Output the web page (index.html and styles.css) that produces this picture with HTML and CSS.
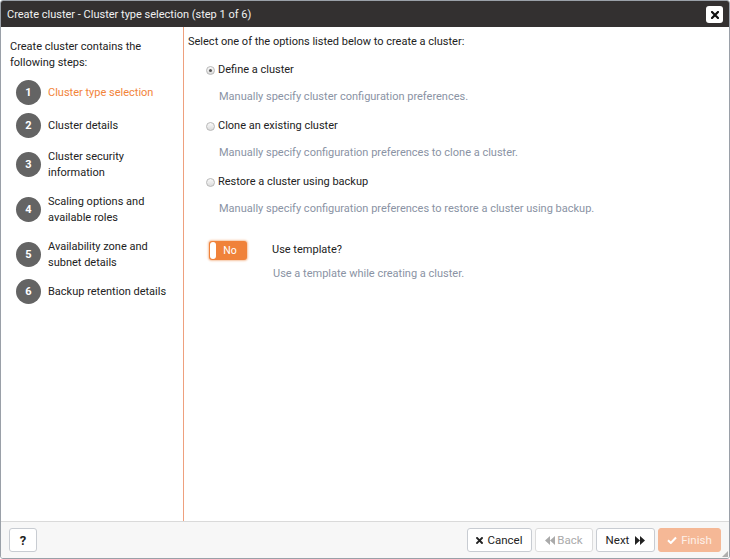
FILE: index.html
```html
<!DOCTYPE html>
<html>
<head>
<meta charset="utf-8">
<link rel="stylesheet" href="styles.css">
</head>
<body>
<div class="dialog">
  <div class="header">
    <span class="title">Create cluster - Cluster type selection (step 1 of 6)</span>
    <span class="close"><svg width="8" height="8" viewBox="0 0 8 8"><path d="M1 1L7 7M7 1L1 7" stroke="#111" stroke-width="2.2" stroke-linecap="square"/></svg></span>
  </div>
  <div class="body">
    <div class="steps">
      <div class="intro">Create cluster contains the following steps:</div>
      <div class="step active"><span class="num">1</span><span class="txt">Cluster type selection</span></div>
      <div class="step"><span class="num">2</span><span class="txt">Cluster details</span></div>
      <div class="step"><span class="num">3</span><span class="txt">Cluster security information</span></div>
      <div class="step"><span class="num">4</span><span class="txt">Scaling options and available roles</span></div>
      <div class="step"><span class="num">5</span><span class="txt">Availability zone and subnet details</span></div>
      <div class="step"><span class="num">6</span><span class="txt">Backup retention details</span></div>
    </div>
    <div class="content">
      <div class="lead">Select one of the options listed below to create a cluster:</div>
      <div class="option">
        <div class="radio-row"><span class="radio checked"></span><span>Define a cluster</span></div>
        <div class="desc">Manually specify cluster configuration preferences.</div>
      </div>
      <div class="option">
        <div class="radio-row"><span class="radio"></span><span>Clone an existing cluster</span></div>
        <div class="desc">Manually specify configuration preferences to clone a cluster.</div>
      </div>
      <div class="option">
        <div class="radio-row"><span class="radio"></span><span>Restore a cluster using backup</span></div>
        <div class="desc">Manually specify configuration preferences to restore a cluster using backup.</div>
      </div>
      <div class="template">
        <div class="toggle"><span class="handle"></span><span class="tlabel">No</span></div>
        <div class="tinfo">
          <div class="tq">Use template?</div>
          <div class="tdesc">Use a template while creating a cluster.</div>
        </div>
      </div>
    </div>
  </div>
  <div class="footer">
    <button class="btn help">?</button>
    <div class="actions">
      <button class="btn cancel"><svg class="ico" width="7" height="7" viewBox="0 0 7 7"><path d="M1 1L6 6M6 1L1 6" stroke="#222" stroke-width="1.9" stroke-linecap="square"/></svg>Cancel</button>
      <button class="btn back disabled"><svg class="ico" width="10" height="9" viewBox="0 0 10 9"><path d="M5 0V9L0 4.5Z M10 0V9L5 4.5Z" fill="#aaa"/></svg>Back</button>
      <button class="btn next">Next<svg class="ico" width="10" height="9" viewBox="0 0 10 9"><path d="M0 0V9L5 4.5Z M5 0V9L10 4.5Z" fill="#222"/></svg></button>
      <button class="btn finish"><svg class="ico" width="10" height="8" viewBox="0 0 10 8"><path d="M1 4.2L3.8 7L9 1.5" stroke="#fff" stroke-width="2" fill="none"/></svg>Finish</button>
    </div>
  </div>
  <span class="grip"></span>
</div>
</body>
</html>
```

FILE: styles.css
```css
* { box-sizing: border-box; }
html, body { margin: 0; padding: 0; }
body {
  width: 730px;
  height: 559px;
  font-family: Roboto, "Liberation Sans", Arial, sans-serif;
  font-size: 11px;
  color: #222;
  background: #fff;
  overflow: hidden;
}
.dialog {
  position: relative;
  width: 730px;
  height: 559px;
  border: 1px solid #9aa0a8;
  border-radius: 3px;
  display: flex;
  flex-direction: column;
  overflow: hidden;
  background: #fff;
}
.header {
  height: 26px;
  flex: none;
  background: #333030;
  color: #f0f0f0;
  display: flex;
  align-items: center;
  justify-content: space-between;
  padding: 0 6px 0 6px;
}
.title { font-size: 11px; }
.close {
  width: 17px;
  height: 17px;
  background: #fff;
  border-radius: 3px;
  display: flex;
  align-items: center;
  justify-content: center;
  margin-top: 1px;
}
.body {
  flex: 1;
  display: flex;
  min-height: 0;
}
.steps {
  width: 183px;
  flex: none;
  border-right: 1px solid #eea07e;
  padding: 12px 4px 0 9px;
}
.intro {
  line-height: 16px;
  margin-bottom: 9px;
}
.step {
  display: flex;
  align-items: center;
  margin-left: 6px;
  margin-bottom: 8px;
  min-height: 25px;
}
.step:last-child { margin-top: -2px; }
.num {
  width: 25px;
  height: 25px;
  flex: none;
  border-radius: 50%;
  background: #646464;
  color: #fff;
  font-weight: bold;
  font-size: 11px;
  display: flex;
  align-items: center;
  justify-content: center;
  margin-right: 7px;
}
.txt {
  line-height: 16px;
  padding: 2.5px 0;
}
.step.active .txt { color: #f2843a; }
.content {
  flex: 1;
  padding: 7px 0 0 4px;
}
.lead { line-height: 16px; margin-bottom: 12px; }
.option { margin-left: 18px; margin-bottom: 13px; }
.radio-row {
  display: flex;
  align-items: center;
  line-height: 16px;
}
.radio {
  width: 9px;
  height: 9px;
  border-radius: 50%;
  border: 1px solid #b8b8b8;
  background: linear-gradient(#fafafa, #dcdcdc);
  margin-right: 3px;
  position: relative;
}
.radio.checked::after {
  content: "";
  position: absolute;
  left: 2px;
  top: 2px;
  width: 3px;
  height: 3px;
  border-radius: 50%;
  background: #555;
}
.desc {
  color: #8a93a4;
  line-height: 16px;
  margin: 11px 0 0 13px;
}
.template {
  display: flex;
  align-items: flex-start;
  margin: 24px 0 0 21px;
}
.toggle {
  width: 38px;
  height: 19px;
  background: #f0823a;
  border-radius: 3px;
  box-shadow: 0 0 2px 1px #f6c5a3;
  display: flex;
  align-items: center;
}
.handle {
  width: 6px;
  height: 17px;
  background: #fff;
  border-radius: 3px;
  margin-left: 1px;
}
.tlabel {
  color: #fff;
  font-size: 10.5px;
  flex: 1;
  text-align: center;
  padding-right: 3px;
}
.tinfo { margin-left: 25px; }
.tq { line-height: 16px; margin-top: 1px; }
.tdesc { color: #8a93a4; line-height: 16px; margin-top: 8px; margin-left: 1px; }
.footer {
  height: 37px;
  flex: none;
  border-top: 1px solid #dadada;
  background: #f7f7f7;
  display: flex;
  align-items: center;
  justify-content: space-between;
  padding: 0 8px 0 8px;
}
.actions { display: flex; gap: 3px; }
.btn {
  font-family: inherit;
  font-size: 11.5px;
  height: 24px;
  border: 1px solid #c8ccd2;
  border-radius: 3px;
  background: #fff;
  color: #222;
  padding: 0 6px;
  display: flex;
  align-items: center;
  justify-content: center;
  gap: 4px;
}
.help { width: 28px; font-weight: bold; font-size: 13px; }
.cancel { width: 65px; }
.back { width: 58px; gap: 2px; }
.next { width: 59px; gap: 6px; }
.finish { width: 63px; }
.btn.disabled { color: #aaa; border-color: #dcdcdc; }
.btn.finish { background: #f5b896; border-color: #f5b896; color: #fdf0e8; }
.grip {
  position: absolute;
  right: 1px;
  bottom: 1px;
  width: 6px;
  height: 6px;
  background: radial-gradient(circle, #aaa 0.7px, transparent 0.8px) 0 0 / 2px 2px;
  clip-path: polygon(100% 0, 100% 100%, 0 100%);
}
```
